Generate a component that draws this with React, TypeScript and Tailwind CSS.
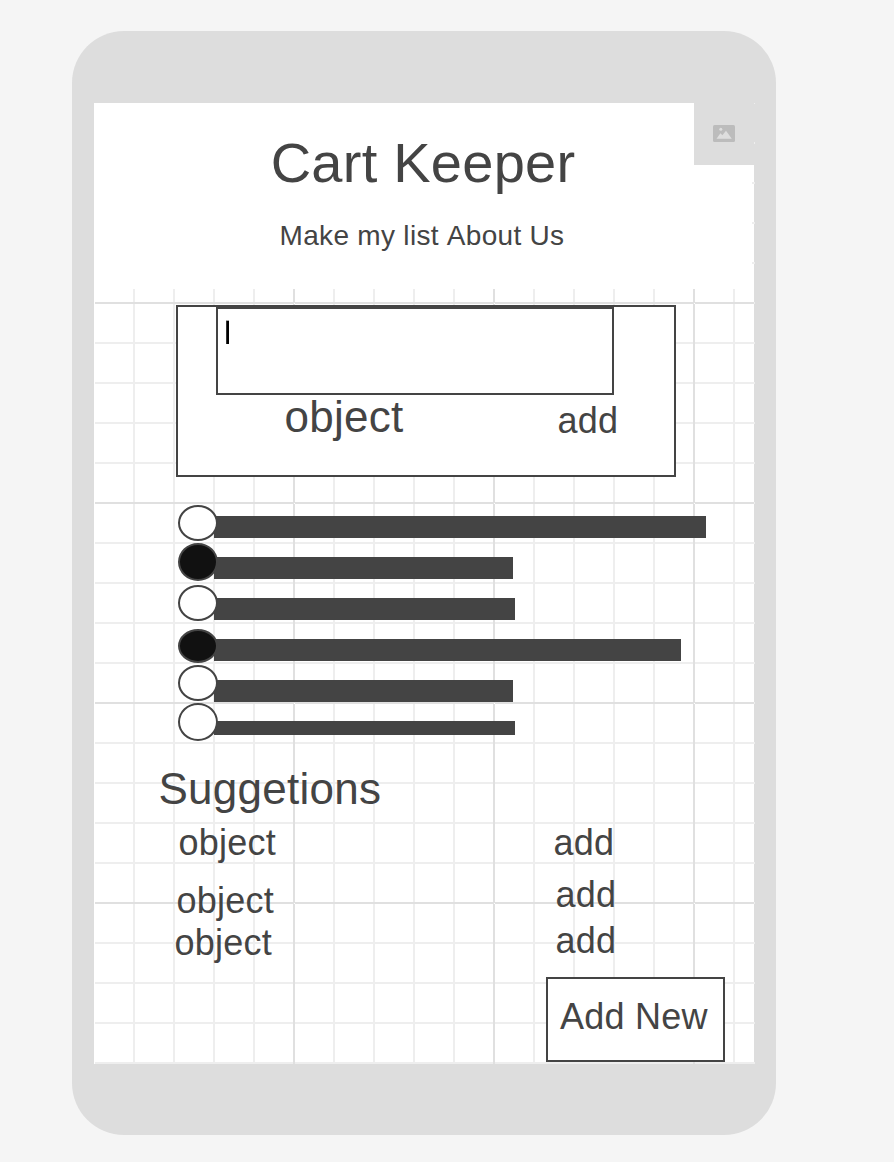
import React from "react";

const dots = [
  "h-9 bg-white",
  "mt-0.5 h-[38px] bg-[#111]",
  "mt-1 h-9 bg-white",
  "mt-2 h-[34px] bg-[#111]",
  "mt-0.5 h-9 bg-white",
  "mt-0.5 h-[38px] bg-white",
];

const bars = [
  "w-[492px] h-[22px]",
  "w-[299px] h-[22px]",
  "w-[301px] h-[22px]",
  "w-[467px] h-[22px]",
  "w-[299px] h-[22px]",
  "w-[301px] h-3.5",
];

const grid =
  "[background-image:conic-gradient(at_1px_1px,transparent_75%,#fff_0),linear-gradient(to_right,#e0e0e0_2px,transparent_2px),linear-gradient(#e0e0e0_2px,transparent_2px),linear-gradient(to_right,#eee_2px,transparent_2px),linear-gradient(#eee_2px,transparent_2px)] [background-size:200px_200px,200px_200px,659px_200px,40px_40px,40px_40px] [background-position:199px_200px,198px_0,0_199px,38px_0,0_39px] [background-repeat:repeat,repeat,repeat-y,repeat,repeat]";

function ImageIcon() {
  return (
    <svg width="22" height="17" viewBox="0 0 22 17">
      <rect width="22" height="17" rx="1.5" fill="#bcbcbc" />
      <circle cx="7.8" cy="4.3" r="1.5" fill="#dedede" />
      <path d="M3.5 13.7 L7.4 8.3 L9.4 10.2 L13 5.8 L18.8 13.7 Z" fill="#dedede" />
    </svg>
  );
}

export default function App() {
  return (
    <div className="h-[1162px] w-[894px] overflow-hidden bg-[#f5f5f5] pl-[72px] pt-[31px] font-['Liberation_Sans',sans-serif] tracking-[0.25px] text-[#444]">
      <div className="h-[1104px] w-[704px] rounded-[52px] bg-[#ddd] pl-[22px] pt-[72px]">
        <div className="h-[961px] w-[660px] bg-white pl-px">
          <div className={`flex h-[961px] w-[660px] flex-col ${grid}`}>
            <header className="flex h-[186px] shrink-0">
              <div className="-ml-px flex h-[186px] w-[658px] flex-col items-center bg-white">
                <h1 className="mt-7 whitespace-nowrap text-[56px] leading-[64px]">Cart Keeper</h1>
                <nav className="mt-[25px] flex gap-2 whitespace-nowrap pr-0.5 text-[28px] leading-8 tracking-[0.3px]">
                  <a>Make my list</a>
                  <a>About Us</a>
                </nav>
              </div>
              <div className="-ml-[58px] flex h-[62px] w-[60px] items-start bg-[#ddd] pl-[19px] pt-[22px]">
                <ImageIcon />
              </div>
            </header>

            <section className="ml-[81px] mt-4 h-[172px] w-[500px] shrink-0 border-2 border-[#444] bg-white">
              <div className="ml-[38px] h-[88px] w-[398px] border-2 border-[#444] pl-2 pt-[11px]">
                <div className="h-6 w-[3px] border-t border-[#aaa] bg-[linear-gradient(to_right,#333_1px,#000_1px)]" />
              </div>
              <div className="flex items-start whitespace-nowrap">
                <span className="-mt-[3px] ml-[106.5px] w-[273px] text-[44px] leading-[50px]">object</span>
                <span className="mt-1.5 text-[36px] leading-10">add</span>
              </div>
            </section>

            <section className="ml-[83px] mt-7 flex h-[236px] shrink-0">
              <div className="z-10 -mr-1 flex w-10 flex-col">
                {dots.map((dot, i) => (
                  <span key={i} className={`w-10 shrink-0 rounded-[50%] border-2 border-[#444] ${dot}`} />
                ))}
              </div>
              <div className="mt-[11px] flex flex-col gap-[19px]">
                {bars.map((bar, i) => (
                  <span key={i} className={`bg-[#444] ${bar}`} />
                ))}
              </div>
            </section>

            <section className="ml-[63.5px] mt-[23px] h-[213px] shrink-0 whitespace-nowrap text-[36px] leading-10">
              <h2 className="text-[44px] leading-[50px]">Suggetions</h2>
              <div className="flex">
                <div className="flex w-[395px] flex-col pl-5 pt-[9px]">
                  <span>object</span>
                  <span className="-ml-0.5 mt-[18px]">object</span>
                  <span className="-ml-1 mt-0.5">object</span>
                </div>
                <div className="flex flex-col pt-[9px]">
                  <span>add</span>
                  <span className="ml-0.5 mt-3">add</span>
                  <span className="ml-0.5 mt-1.5">add</span>
                </div>
              </div>
            </section>

            <button className="ml-[451px] flex h-[85px] w-[179px] shrink-0 items-start whitespace-nowrap border-2 border-[#444] bg-white pl-3 pt-[18px] text-[36px] leading-10">
              Add New
            </button>
          </div>
        </div>
      </div>
    </div>
  );
}
